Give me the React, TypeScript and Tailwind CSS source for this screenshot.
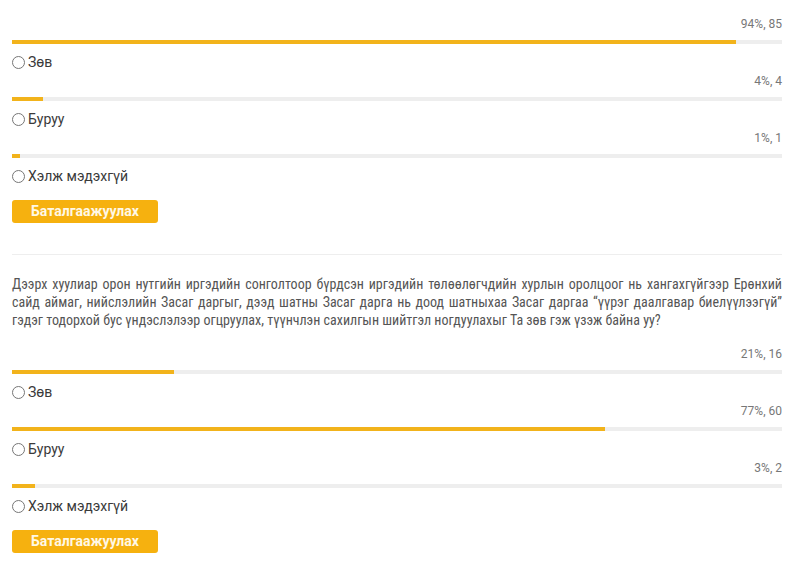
import React from "react";

type Option = { label: string; pct: number; count: number };

const POLLS: { question?: string; options: Option[] }[] = [
  {
    options: [
      { label: "Зөв", pct: 94, count: 85 },
      { label: "Буруу", pct: 4, count: 4 },
      { label: "Хэлж мэдэхгүй", pct: 1, count: 1 },
    ],
  },
  {
    question:
      "Дээрх хуулиар орон нутгийн иргэдийн сонголтоор бүрдсэн иргэдийн төлөөлөгчдийн хурлын оролцоог нь хангахгүйгээр Ерөнхий сайд аймаг, нийслэлийн Засаг даргыг, дээд шатны Засаг дарга нь доод шатныхаа Засаг даргаа “үүрэг даалгавар биелүүлээгүй” гэдэг тодорхой бус үндэслэлээр огцруулах, түүнчлэн сахилгын шийтгэл ногдуулахыг Та зөв гэж үзэж байна уу?",
    options: [
      { label: "Зөв", pct: 21, count: 16 },
      { label: "Буруу", pct: 77, count: 60 },
      { label: "Хэлж мэдэхгүй", pct: 3, count: 2 },
    ],
  },
];

function Poll({ question, options, idx }: { question?: string; options: Option[]; idx: number }) {
  return (
    <div>
      {question && (
        <p className="text-justify text-[14px] leading-[18px] text-[#555] font-['Roboto_Condensed','Liberation_Sans_Narrow',Roboto,sans-serif] mb-[17px]">
          {question}
        </p>
      )}
      {options.map((o) => (
        <div key={o.label}>
          <div className="text-right text-[12px] leading-4 font-normal text-[#777]">
            {o.pct}%, {o.count}
          </div>
          <div className="mt-2 h-1 bg-[#eeeeee]">
            <div className="h-1 bg-[#f2b31b]" style={{ width: `${o.pct}%` }} />
          </div>
          <label className="mt-[10px] h-[19px] flex items-start gap-[3px] text-[14px] leading-[17px] font-normal text-[#3a3a3a]">
            <input type="radio" name={`poll-${idx}`} className="m-0 mt-[2px] w-[13px] h-[13px]" />
            <span>{o.label}</span>
          </label>
        </div>
      ))}
      <button className="mt-[13px] h-[23px] w-[146px] rounded-[3px] bg-[#f6b10f] text-[#fff8e6] font-bold text-[14px]">
        Баталгаажуулах
      </button>
    </div>
  );
}

export default function App() {
  return (
    <div className="bg-white min-h-screen pl-3 pr-[7px] pt-4 font-['Roboto',sans-serif]">
      <Poll options={POLLS[0].options} idx={0} />
      <div className="mt-[31px] mb-5 h-px bg-[#eeeeee]" />
      <Poll question={POLLS[1].question} options={POLLS[1].options} idx={1} />
    </div>
  );
}
